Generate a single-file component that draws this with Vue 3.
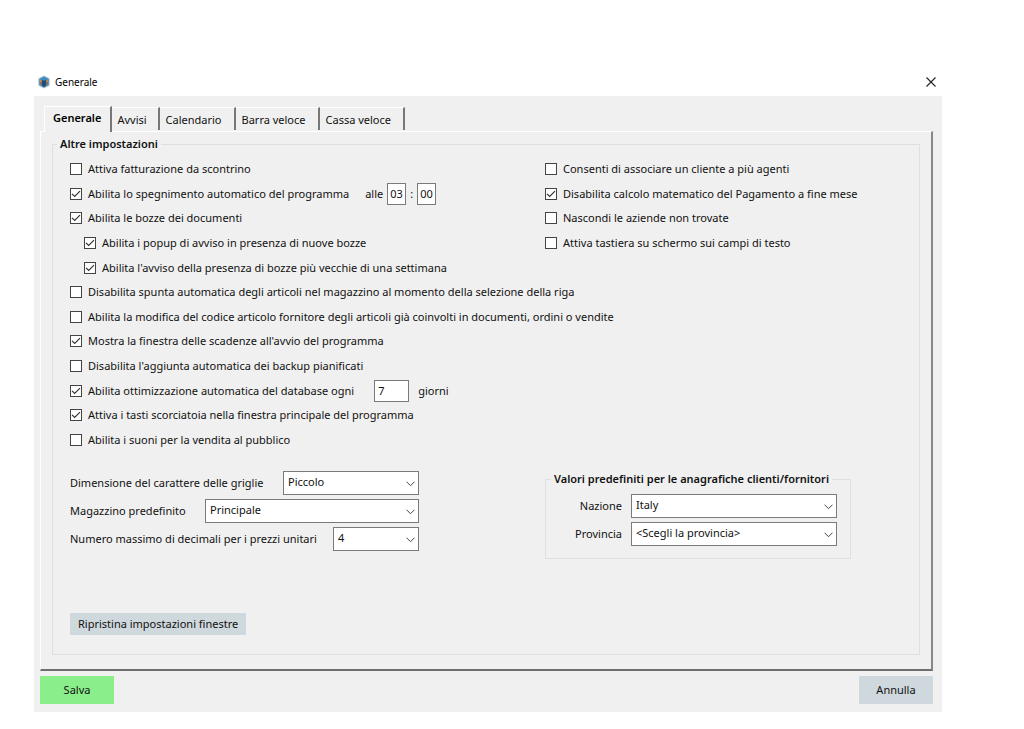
<script setup>
import { reactive, ref } from 'vue'

const tabs = ['Generale', 'Avvisi', 'Calendario', 'Barra veloce', 'Cassa veloce']
const active = ref('Generale')

const left = reactive([
  { id: 'fatt', text: 'Attiva fatturazione da scontrino', on: false },
  { id: 'spegn', text: 'Abilita lo spegnimento automatico del programma', on: true, kind: 'time' },
  { id: 'bozze', text: 'Abilita le bozze dei documenti', on: true },
  { id: 'popup', text: 'Abilita i popup di avviso in presenza di nuove bozze', on: true, sub: true },
  { id: 'vecchie', text: "Abilita l'avviso della presenza di bozze più vecchie di una settimana", on: true, sub: true },
  { id: 'spunta', text: 'Disabilita spunta automatica degli articoli nel magazzino al momento della selezione della riga', on: false },
  { id: 'codice', text: 'Abilita la modifica del codice articolo fornitore degli articoli già coinvolti in documenti, ordini o vendite', on: false },
  { id: 'scad', text: "Mostra la finestra delle scadenze all'avvio del programma", on: true },
  { id: 'backup', text: "Disabilita l'aggiunta automatica dei backup pianificati", on: false },
  { id: 'ottim', text: 'Abilita ottimizzazione automatica del database ogni', on: true, kind: 'days' },
  { id: 'tasti', text: 'Attiva i tasti scorciatoia nella finestra principale del programma', on: true },
  { id: 'suoni', text: 'Abilita i suoni per la vendita al pubblico', on: false },
])
const right = reactive([
  { id: 'agenti', text: 'Consenti di associare un cliente a più agenti', on: false },
  { id: 'calcolo', text: 'Disabilita calcolo matematico del Pagamento a fine mese', on: true },
  { id: 'nascondi', text: 'Nascondi le aziende non trovate', on: false },
  { id: 'tastiera', text: 'Attiva tastiera su schermo sui campi di testo', on: false },
])
const columns = [left, right]

const choices = [
  { id: 'dim', label: 'Dimensione del carattere delle griglie', value: 'Piccolo', size: 'w-m' },
  { id: 'mag', label: 'Magazzino predefinito', value: 'Principale', size: 'w-l' },
  { id: 'dec', label: 'Numero massimo di decimali per i prezzi unitari', value: '4', size: 'w-s' },
]
const places = [
  { id: 'naz', label: 'Nazione', value: 'Italy' },
  { id: 'prov', label: 'Provincia', value: '<Scegli la provincia>' },
]
const hour = ref('03')
const minute = ref('00')
const days = ref('7')
</script>

<template>
  <main class="window">
    <header class="titlebar">
      <svg class="logo" viewBox="0 0 14 16" aria-hidden="true">
        <path d="M7 1l6 3v8l-6 3-6-3V4z" fill="#5d93b8" stroke="#a9c4d6" />
        <path d="M2 5l5-3 5 3-5 2z" fill="#3f8cc4" />
        <path d="M2 5.500l2.500 1v5.500L2 11z" fill="#8a7463" />
        <path d="M4.500 5.500L7 6.500l2.500-1v6L7 14l-2.500-2z" fill="#1f4c78" />
        <path d="M9.500 6.500l2.500-1V11l-2.500 1z" fill="#77716b" />
        <path d="M2.500 5.500l2 .8v2l-2-.8zM9.500 6.300l2-.8v2l-2 .8z" fill="#c98f4e" />
      </svg>
      <h1>Generale</h1>
      <button class="close" type="button" aria-label="Chiudi">
        <svg viewBox="0 0 10 10"><path d="M.5.5l9 9M9.500.5l-9 9" fill="none" stroke="#222" stroke-width="1.100" /></svg>
      </button>
    </header>

    <div class="body">
      <nav class="tabs" role="tablist">
        <button v-for="t in tabs" :key="t" type="button" role="tab" :aria-selected="t === active"
          class="tab" :class="{ active: t === active }" @click="active = t">{{ t }}</button>
      </nav>

      <section class="panel">
        <fieldset class="group main-group">
          <legend>Altre impostazioni</legend>
          <div class="checks">
            <div v-for="(col, c) in columns" :key="c" class="col">
              <div v-for="o in col" :key="o.id" class="row" :class="{ sub: o.sub }">
                <input :id="o.id" v-model="o.on" class="box" type="checkbox" />
                <svg v-if="o.on" class="tick" viewBox="0 0 12 12" aria-hidden="true"><path d="M2 5.800l2.700 2.700L10 3.200" /></svg>
                <label :for="o.id">{{ o.text }}</label>
                <span v-if="o.kind === 'time'" class="extra">
                  <label for="hour">alle</label>
                  <input id="hour" v-model="hour" class="field two" type="text" />
                  <span>:</span>
                  <input v-model="minute" class="field two" type="text" aria-label="Minuti" />
                </span>
                <span v-if="o.kind === 'days'" class="extra days">
                  <input id="days" v-model="days" class="field" type="text" />
                  <label for="days">giorni</label>
                </span>
              </div>
            </div>
          </div>

          <div class="lower">
            <div class="choices">
              <div v-for="s in choices" :key="s.id" class="choice">
                <label :for="s.id">{{ s.label }}</label>
                <span class="combo" :class="s.size">
                  <select :id="s.id"><option>{{ s.value }}</option></select>
                  <svg class="chev" viewBox="0 0 9 6" aria-hidden="true"><path d="M.5.700l4 4 4-4" /></svg>
                </span>
              </div>
            </div>
            <fieldset class="group places">
              <legend>Valori predefiniti per le anagrafiche clienti/fornitori</legend>
              <div v-for="s in places" :key="s.id" class="choice">
                <label :for="s.id">{{ s.label }}</label>
                <span class="combo">
                  <select :id="s.id"><option>{{ s.value }}</option></select>
                  <svg class="chev" viewBox="0 0 9 6" aria-hidden="true"><path d="M.5.700l4 4 4-4" /></svg>
                </span>
              </div>
            </fieldset>
          </div>

          <button class="btn reset" type="button">Ripristina impostazioni finestre</button>
        </fieldset>
      </section>

      <footer class="footer">
        <button class="btn save" type="button">Salva</button>
        <button class="btn" type="button">Annulla</button>
      </footer>
    </div>
  </main>
</template>

<style>
body { background: #fff; }
</style>

<style scoped>
.window, .window * { box-sizing: border-box; }
.window {
  margin: 67px 82px 16px 34px;
  font: 11px/16px "Noto Sans", "Open Sans", sans-serif;
  color: #111;
}
button, input, select { font: inherit; color: inherit; margin: 0; }
.titlebar { display: flex; align-items: center; height: 29px; padding: 0 6px 0 4px; }
.logo { width: 12px; height: 14px; }
h1 { margin: 0 auto 0 5px; font-size: 10px; font-weight: 400; color: #000; }
.close { display: flex; padding: 0; border: 0; background: none; }
.close svg { width: 10px; height: 10px; }
.body { background: #f0f0f0; padding: 10px 9px 8px 6px; }

.tabs { display: flex; align-items: flex-end; height: 25px; padding-left: 4px; }
.tab {
  height: 23px; margin-bottom: 1px; padding: 1px 11px 0 5px;
  border: 0; border-top: 1px solid #fff; border-right: 2px solid #777;
  background: #f0f0f0; white-space: nowrap;
}
.tab + .tab + .tab { padding: 1px 12px 0 6px; }
.tab.active {
  z-index: 1; height: 26px; margin-bottom: -1px; padding: 0 9px 3px 8px;
  border-left: 1px solid #fff; font-weight: 600; color: #000;
}
.panel {
  padding: 4px 11px 14px 11px;
  border: 1px solid #fff; border-right: 2px solid #888; border-bottom: 2px solid #6e6e6e;
}
.group { min-width: 0; margin: 0; border: 1px solid #dfdfdf; }
legend { padding: 0 3px; font-weight: 600; color: #111; white-space: nowrap; }
.main-group { padding: 5px 17px 19px 17px; }
.main-group > legend { margin-left: -13px; }

.checks { display: grid; grid-template-columns: 475px 1fr; grid-template-rows: 295px; }
.col { display: grid; grid-template-rows: repeat(12, 1fr); }
.row { display: flex; align-items: center; position: relative; min-height: 0; white-space: nowrap; }
.row.sub { padding-left: 14px; }
.box {
  appearance: none; flex: none; width: 12px; height: 12px; margin-right: 6px;
  border: 1px solid #444; background: #fff;
}
.tick {
  flex: none; width: 12px; height: 12px; margin: 0 6px 0 -18px;
  pointer-events: none; fill: none; stroke: #333; stroke-width: 1.2;
  z-index: 1;
}
.extra { display: flex; align-items: center; gap: 4px; margin-left: 16px; }
.extra.days { gap: 9px; margin-left: 20px; }
.field { width: 35px; height: 22px; padding: 0 3px; border: 1px solid #7a7a7a; background: #fff; outline: 0; }
.field.two { width: 19px; padding: 0 2px; }

.lower { display: grid; grid-template-columns: 475px 306px; margin-top: 19px; }
.choices { display: grid; gap: 4px; align-content: start; width: 349px; }
.choice { display: flex; align-items: center; justify-content: space-between; white-space: nowrap; }
.combo { display: block; position: relative; height: 24px; }
.w-s { width: 86px; }
.w-m { width: 136px; }
.w-l { width: 214px; }
select {
  appearance: none; display: block; width: 100%; height: 24px; padding: 0 20px 2px 4px;
  border: 1px solid #7a7a7a; border-radius: 0; background: #fff; outline: 0;
}
.chev { position: absolute; right: 4px; top: 10px; width: 9px; height: 6px; pointer-events: none; fill: none; stroke: #444; }
.places { display: grid; gap: 4px; padding: 7px 13px 12px 13px; }
.places legend { margin-left: -8px; }
.places .choice { justify-content: flex-end; gap: 9px; }
.places .combo { width: 206px; }

.btn { min-width: 74px; height: 28px; padding: 0 8px; border: 0; background: #cfd8dc; white-space: nowrap; }
.reset { display: block; min-width: 176px; height: 22px; margin-top: 54px; }
.save { background: #8aee8a; }
.footer { display: flex; justify-content: space-between; padding: 5px 0 0 0; }
</style>
